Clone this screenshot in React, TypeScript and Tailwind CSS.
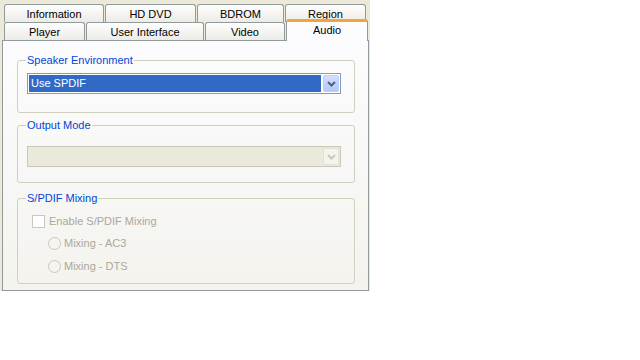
import React from 'react'

const FONT = "font-['Liberation_Sans',Tahoma,Arial,sans-serif]"

function Tab({ label, w }: { label: string; w: string }) {
  return (
    <div
      className={`${w} h-full border border-b-0 border-[#919b9c] rounded-t-[3px] bg-linear-to-b from-[#fefefe] to-[#ecebe6] flex items-center justify-center pt-[2px] text-[11px] text-black leading-none`}
    >
      {label}
    </div>
  )
}

function Chevron({ color }: { color: string }) {
  return (
    <svg width="9" height="6" viewBox="0 0 9 6">
      <path d="M1 1 L4.5 4.5 L8 1" fill="none" stroke={color} strokeWidth="2" />
    </svg>
  )
}

function Combo({ value, disabled }: { value?: string; disabled?: boolean }) {
  return (
    <div
      className={`h-[21px] w-[314px] ml-[9px] border p-[1px] flex gap-[2px] ${
        disabled ? 'border-[#c9c7ba] bg-[#ebe9da]' : 'border-[#7f9db9] bg-white'
      }`}
    >
      <div
        className={`flex-1 flex items-center px-[2px] text-[11px] ${
          disabled ? '' : 'bg-[#316ac5] text-white'
        }`}
      >
        {value}
      </div>
      <div
        className={`w-[16px] rounded-[2px] border flex items-center justify-center ${
          disabled
            ? 'border-[#e3e1d6] bg-[#f4f3ee]'
            : 'border-[#bccdf6] bg-linear-to-b from-[#d2defc] to-[#b5c9f6]'
        }`}
      >
        <Chevron color={disabled ? '#c9c7ba' : '#4d6185'} />
      </div>
    </div>
  )
}

function Group({ title, className, children }: { title: string; className: string; children: React.ReactNode }) {
  return (
    <fieldset className={`w-[338px] border border-[#d0d0bf] rounded-[3px] ${className}`}>
      <legend className="ml-[8px] px-[1px] text-[11px] leading-[13px] text-[#0046d5]">{title}</legend>
      {children}
    </fieldset>
  )
}

export default function App() {
  return (
    <div className={`w-[640px] h-[360px] bg-white ${FONT}`}>
      <div className="w-[370px] h-[291px] bg-[#ece9d8] pt-[4px]">
        <div className="flex gap-[1px] ml-[4px] h-[18px]">
          <Tab label="Information" w="w-[100px]" />
          <Tab label="HD DVD" w="w-[91px]" />
          <Tab label="BDROM" w="w-[87px]" />
          <Tab label="Region" w="w-[81px]" />
        </div>
        <div className="flex gap-[1px] ml-[4px] h-[18px]">
          <Tab label="Player" w="w-[81px]" />
          <Tab label="User Interface" w="w-[118px]" />
          <Tab label="Video" w="w-[80px]" />
          <div className="relative z-10 w-[82px] h-[22px] -mt-[3px] self-start border-x border-[#919b9c] border-t-[3px] border-t-[#f2a53a] rounded-t-[3px] bg-[#fcfcfe] flex justify-center pt-[2px] text-[11px] leading-[13px] text-black">
            Audio
          </div>
        </div>
        <div className="ml-[2px] w-[367px] h-[251px] border border-[#919b9c] bg-linear-to-b from-[#fcfcfe] to-[#f4f3ee] pl-[14px]">
          <Group title="Speaker Environment" className="mt-[13px] pt-[6px] pb-[18px]">
            <Combo value="Use SPDIF" />
          </Group>
          <Group title="Output Mode" className="mt-[6px] pt-[14px] pb-[15px]">
            <Combo disabled />
          </Group>
          <Group title="S/PDIF Mixing" className="mt-[9px] pt-[10px] pb-[10px] text-[11px] text-[#aca899]">
            <div className="flex items-center h-[13px] ml-[14px] gap-[4px]">
              <div className="w-[13px] h-[13px] border border-[#cac8bb] bg-white" />
              <span>Enable S/PDIF Mixing</span>
            </div>
            <div className="flex items-center h-[13px] ml-[30px] mt-[9px] gap-[3px]">
              <div className="w-[13px] h-[13px] rounded-full border border-[#cac8bb] bg-[#f5f4ee]" />
              <span>Mixing - AC3</span>
            </div>
            <div className="flex items-center h-[13px] ml-[30px] mt-[10px] gap-[3px]">
              <div className="w-[13px] h-[13px] rounded-full border border-[#cac8bb] bg-[#f5f4ee]" />
              <span>Mixing - DTS</span>
            </div>
          </Group>
        </div>
      </div>
    </div>
  )
}
